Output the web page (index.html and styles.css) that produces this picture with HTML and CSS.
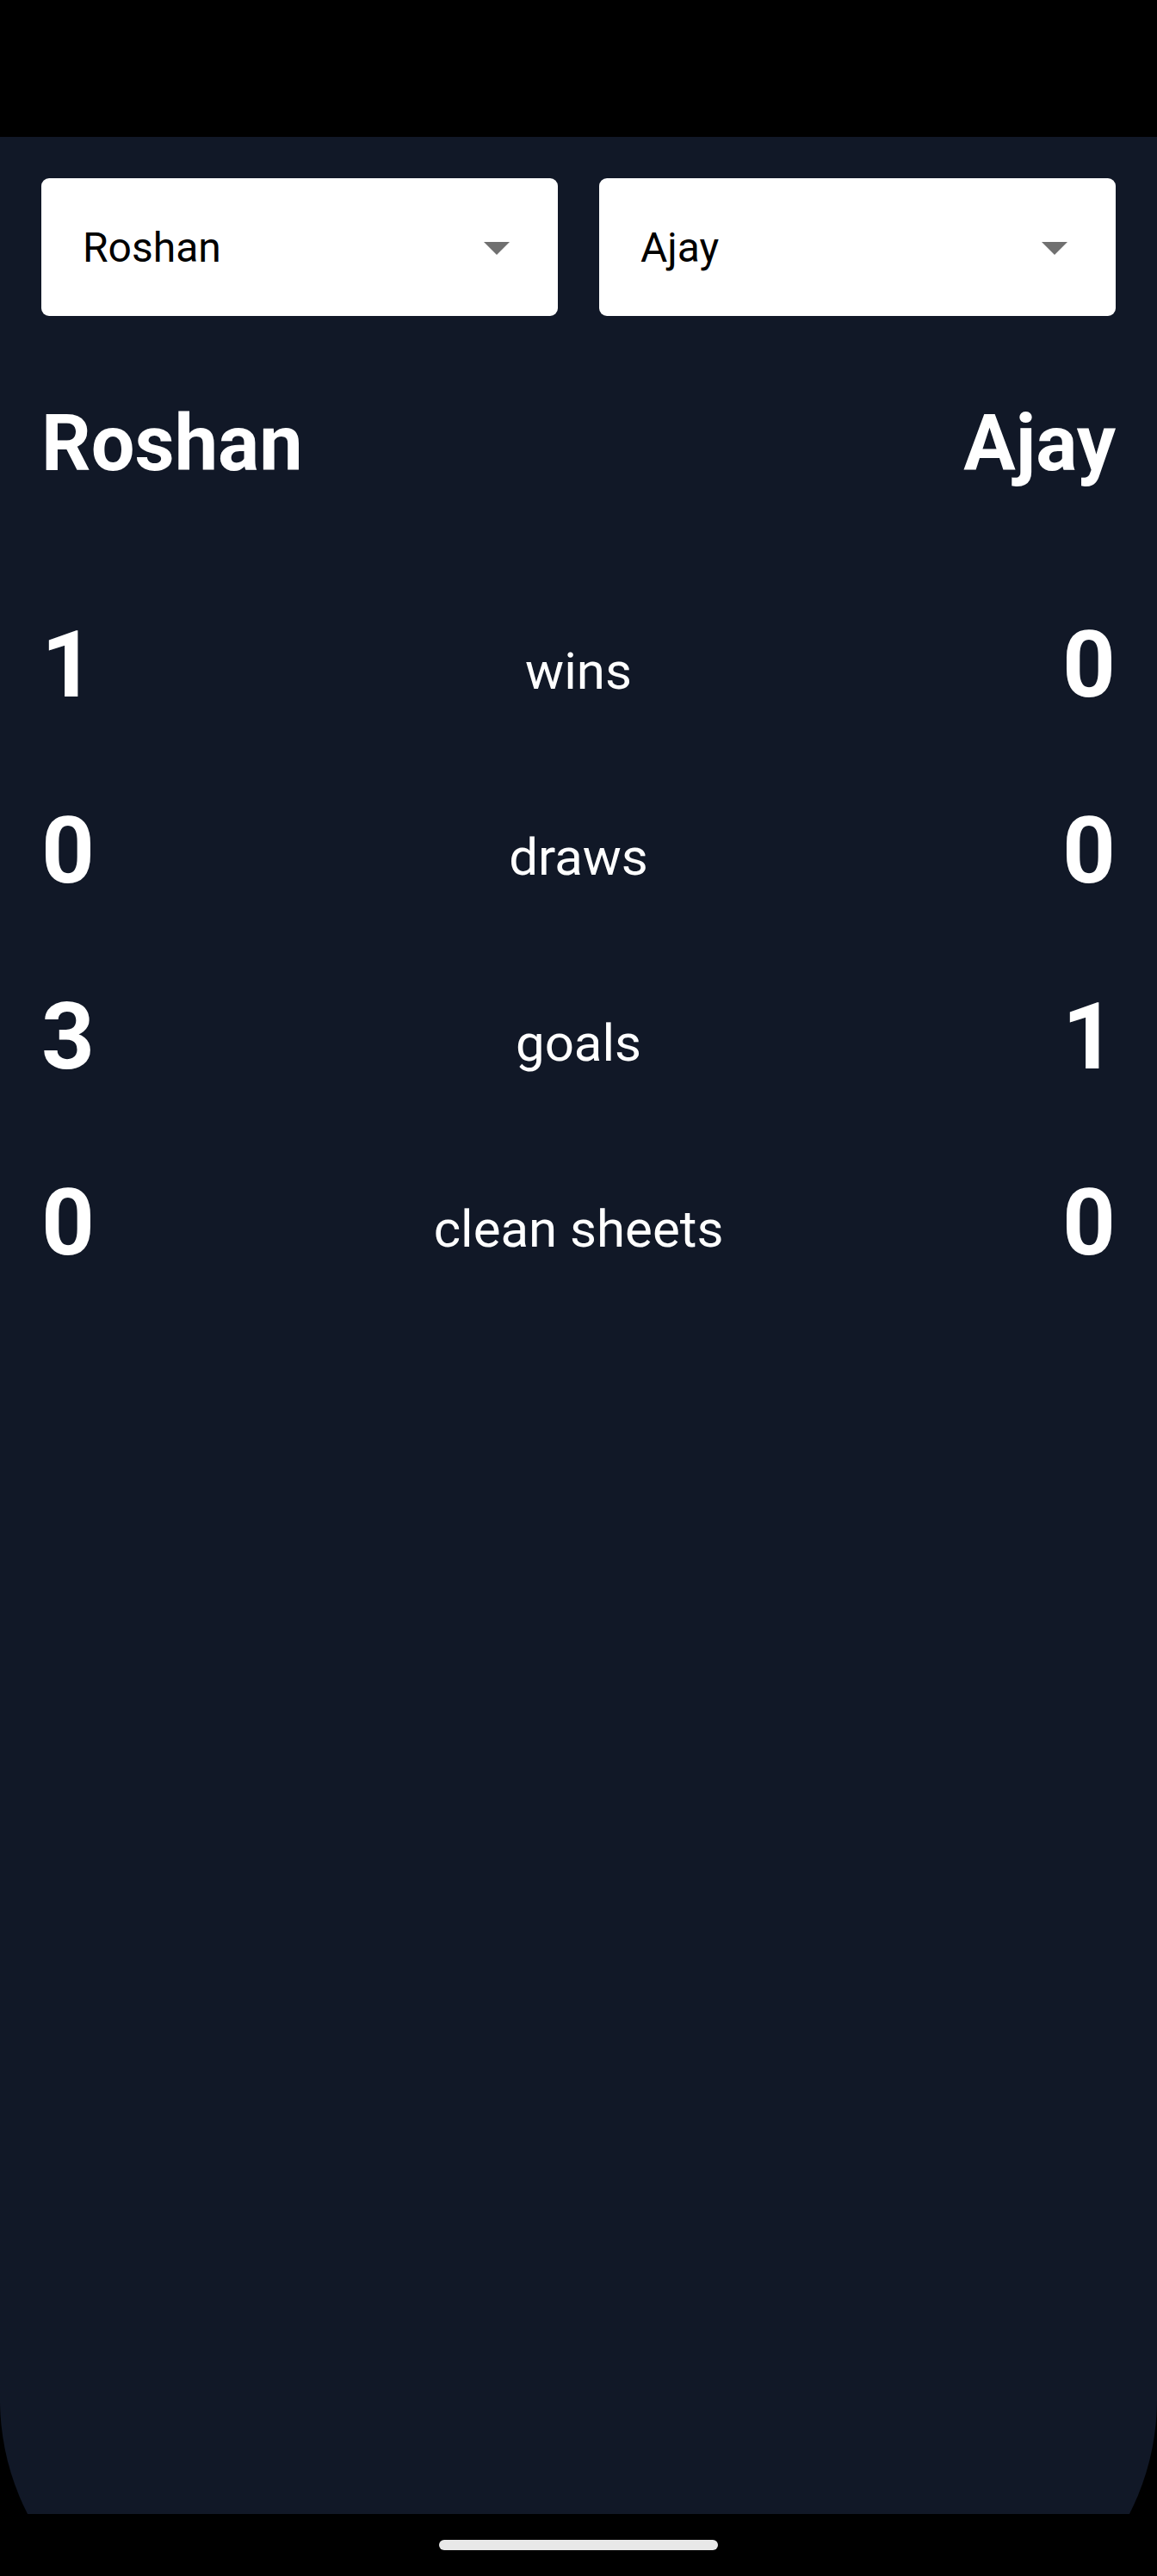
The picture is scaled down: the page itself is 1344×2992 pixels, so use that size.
FILE: index.html
```html
<!DOCTYPE html>
<html lang="en">
<head>
<meta charset="utf-8">
<title>Head to head</title>
<link rel="stylesheet" href="styles.css">
</head>
<body>
<div class="status-bar"></div>
<div class="screen">
  <main class="app">
    <div class="pickers">
      <div class="picker">
        <span class="picker-value">Roshan</span>
        <svg class="picker-arrow" viewBox="0 0 24 24" width="72" height="72"><path d="M7 10l5 5 5-5z"/></svg>
      </div>
      <div class="picker">
        <span class="picker-value">Ajay</span>
        <svg class="picker-arrow" viewBox="0 0 24 24" width="72" height="72"><path d="M7 10l5 5 5-5z"/></svg>
      </div>
    </div>
    <div class="names">
      <span class="name">Roshan</span>
      <span class="name">Ajay</span>
    </div>
    <div class="stats">
      <div class="stat-row"><span class="num">1</span><span class="label">wins</span><span class="num num-right">0</span></div>
      <div class="stat-row"><span class="num">0</span><span class="label">draws</span><span class="num num-right">0</span></div>
      <div class="stat-row"><span class="num">3</span><span class="label">goals</span><span class="num num-right">1</span></div>
      <div class="stat-row"><span class="num">0</span><span class="label">clean sheets</span><span class="num num-right">0</span></div>
    </div>
  </main>
</div>
<div class="nav-bar"><div class="nav-pill"></div></div>
</body>
</html>
```

FILE: styles.css
```css
html, body {
  margin: 0;
  padding: 0;
  background: #000;
}
body {
  font-family: Roboto, "Noto Sans", "Liberation Sans", sans-serif;
  color: #fff;
}
.status-bar {
  height: 159px;
  background: #000;
}
.screen {
  height: 2761px;
  overflow: hidden;
}
.app {
  box-sizing: border-box;
  height: 2920px;
  background: #111827;
  border-radius: 0 0 292px 292px;
  padding: 48px 48px 0;
}
.pickers {
  display: grid;
  grid-template-columns: 1fr 1fr;
  gap: 48px;
}
.picker {
  height: 160px;
  background: #fff;
  border-radius: 9px;
  display: flex;
  align-items: center;
  justify-content: space-between;
  padding: 0 35px 0 48px;
}
.picker-value {
  font-size: 48px;
  color: #000;
}
.picker-arrow {
  fill: #707070;
  display: block;
}
.names {
  display: flex;
  justify-content: space-between;
  margin-top: 96px;
}
.name {
  font-size: 90px;
  font-weight: 700;
  line-height: normal;
}
.stats {
  margin-top: 96px;
}
.stat-row {
  height: 216px;
  display: grid;
  grid-template-columns: 1fr auto 1fr;
  align-items: center;
}
.num {
  font-size: 108px;
  font-weight: 700;
  line-height: normal;
}
.num-right {
  text-align: right;
}
.label {
  font-size: 60px;
  line-height: normal;
  padding-top: 15px;
  text-align: center;
}
.nav-bar {
  height: 72px;
  background: #000;
  display: flex;
  justify-content: center;
}
.nav-pill {
  width: 324px;
  height: 12px;
  margin-top: 30px;
  border-radius: 6px;
  background: #e8e8e8;
}
```
